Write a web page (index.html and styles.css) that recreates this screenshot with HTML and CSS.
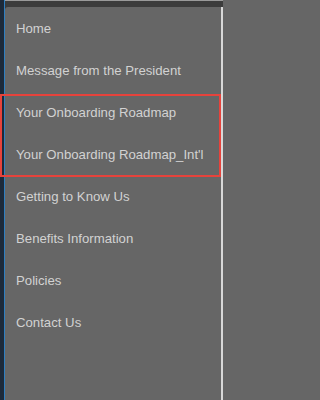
FILE: index.html
```html
<!DOCTYPE html>
<html lang="en">
<head>
<meta charset="utf-8">
<title>Menu</title>
<link rel="stylesheet" href="styles.css">
</head>
<body>
<div class="page">
  <div class="rail"></div>
  <div class="content">
    <div class="topbar"></div>
    <div class="row">
      <nav class="menu">
        <ul class="menu-list">
          <li class="menu-item">Home</li>
          <li class="menu-item">Message from the President</li>
          <li class="menu-item">Your Onboarding Roadmap</li>
          <li class="menu-item">Your Onboarding Roadmap_Int'l</li>
          <li class="menu-item">Getting to Know Us</li>
          <li class="menu-item">Benefits Information</li>
          <li class="menu-item">Policies</li>
          <li class="menu-item">Contact Us</li>
        </ul>
      </nav>
      <div class="gutter"></div>
    </div>
  </div>
  <div class="highlight"></div>
</div>
</body>
</html>
```

FILE: styles.css
```css
html, body {
  margin: 0;
  padding: 0;
  background: #666666;
}
.page {
  position: relative;
  display: flex;
  width: 223px;
  height: 400px;
  overflow: hidden;
  font-family: "Liberation Sans", Arial, sans-serif;
}
.rail {
  width: 4px;
  flex: none;
  background: #1d2a3a;
  border-right: 1px solid #2f7fc1;
}
.content {
  flex: 1;
  display: flex;
  flex-direction: column;
  background: #3c3c3c;
}
.topbar {
  height: 7px;
  flex: none;
  background: #3c3c3c;
  border-top: 1px solid #9a9a9a;
  box-sizing: border-box;
}
.row {
  flex: 1;
  display: flex;
}
.menu {
  flex: 1;
  background: #666666;
  border-top-left-radius: 3px;
}
.gutter {
  width: 2px;
  flex: none;
  background: #d8d8d8;
}
.menu-list {
  list-style: none;
  margin: 0;
  padding: 0;
}
.menu-item {
  height: 42px;
  display: flex;
  align-items: center;
  padding-left: 11px;
  font-size: 13.2px;
  color: #d2d2d2;
  white-space: nowrap;
}
.highlight {
  position: absolute;
  left: 0;
  top: 94px;
  width: 221px;
  height: 83px;
  box-sizing: border-box;
  border: 2px solid #e6433c;
}
```
